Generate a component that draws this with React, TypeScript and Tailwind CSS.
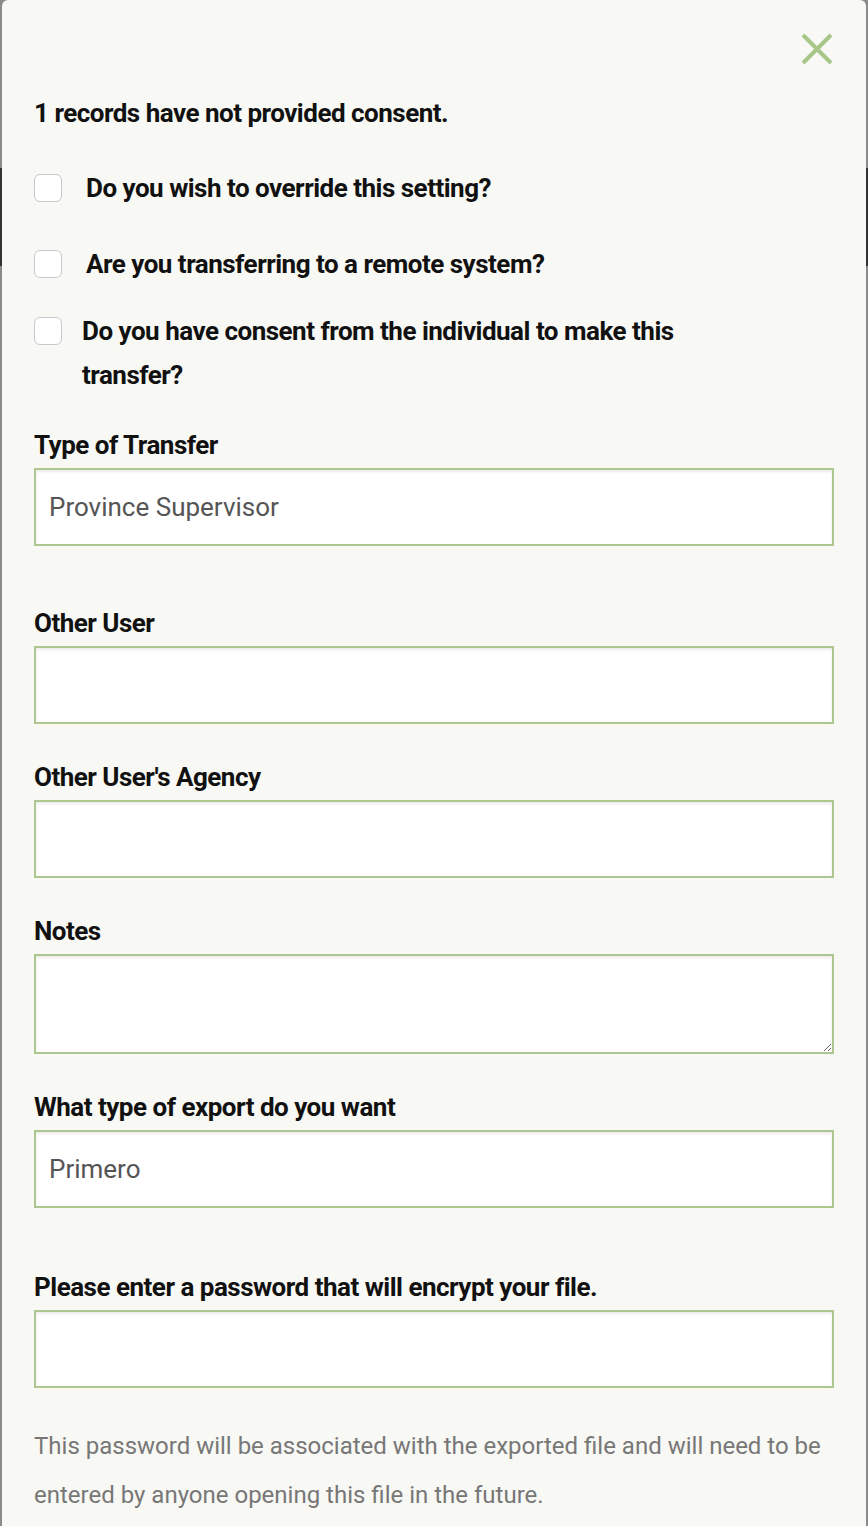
import React from "react";

const inputCls =
  "block w-full h-[78px] border-2 border-[#adc78e] bg-white px-[13px] text-[26px] text-[#555555] shadow-[inset_0_2px_3px_rgba(0,0,0,0.08)] outline-none";

const labelCls = "text-[26px] font-bold leading-[30px] tracking-[-0.5px] text-[#111111]";

export default function App() {
  return (
    <div
      className="relative min-h-[1526px] w-[868px] overflow-hidden bg-[#8b8b8b]"
      style={{ fontFamily: "Roboto, 'Liberation Sans', sans-serif" }}
    >
      <div className="absolute left-0 top-[168px] h-[98px] w-[2px] bg-[#333333]" />
      <div className="absolute right-0 top-[168px] h-[98px] w-[2px] bg-[#333333]" />
      <div className="mx-[2px] min-h-[1526px] rounded-t-[6px] bg-[#f8f8f4] px-[32px] pt-[33px]">
        <div className="flex justify-end pr-[1px]">
          <svg width="32" height="32" viewBox="0 0 32 32">
            <path d="M2 2 L30 30 M30 2 L2 30" stroke="#a9c689" strokeWidth="4" />
          </svg>
        </div>
        <div className={labelCls + " mt-[33px]"}>1 records have not provided consent.</div>

        <div className="mt-[45px] flex h-[30px] items-center">
          <span className="h-[28px] w-[28px] shrink-0 rounded-[6px] border border-[#c8c8c8] bg-white" />
          <span className={labelCls + " ml-[24px]"}>Do you wish to override this setting?</span>
        </div>
        <div className="mt-[46px] flex h-[30px] items-center">
          <span className="h-[28px] w-[28px] shrink-0 rounded-[6px] border border-[#c8c8c8] bg-white" />
          <span className={labelCls + " ml-[24px]"}>Are you transferring to a remote system?</span>
        </div>
        <div className="mt-[30px] flex items-start">
          <span className="mt-[8px] h-[28px] w-[28px] shrink-0 rounded-[6px] border border-[#c8c8c8] bg-white" />
          <span className="ml-[20px] max-w-[640px] text-[26px] font-bold leading-[44px] tracking-[-0.5px] text-[#111111]">
            Do you have consent from the individual to make this transfer?
          </span>
        </div>

        <div className={labelCls + " mt-[33px]"}>Type of Transfer</div>
        <div className={inputCls + " mt-[8px] flex items-center"}>Province Supervisor</div>

        <div className={labelCls + " mt-[62px]"}>Other User</div>
        <input className={inputCls + " mt-[8px]"} />

        <div className={labelCls + " mt-[38px]"}>Other User's Agency</div>
        <input className={inputCls + " mt-[8px]"} />

        <div className={labelCls + " mt-[38px]"}>Notes</div>
        <textarea className={inputCls + " mt-[8px] h-[100px] resize-y"} />

        <div className={labelCls + " mt-[38px]"}>What type of export do you want</div>
        <div className={inputCls + " mt-[8px] flex items-center"}>Primero</div>

        <div className={labelCls + " mt-[64px]"}>Please enter a password that will encrypt your file.</div>
        <input type="password" className={inputCls + " mt-[8px]"} />

        <p className="mt-[34px] text-[24px] leading-[49px] text-[#777777]">
          This password will be associated with the exported file and will need to be entered by anyone opening this file in the future.
        </p>
      </div>
    </div>
  );
}
